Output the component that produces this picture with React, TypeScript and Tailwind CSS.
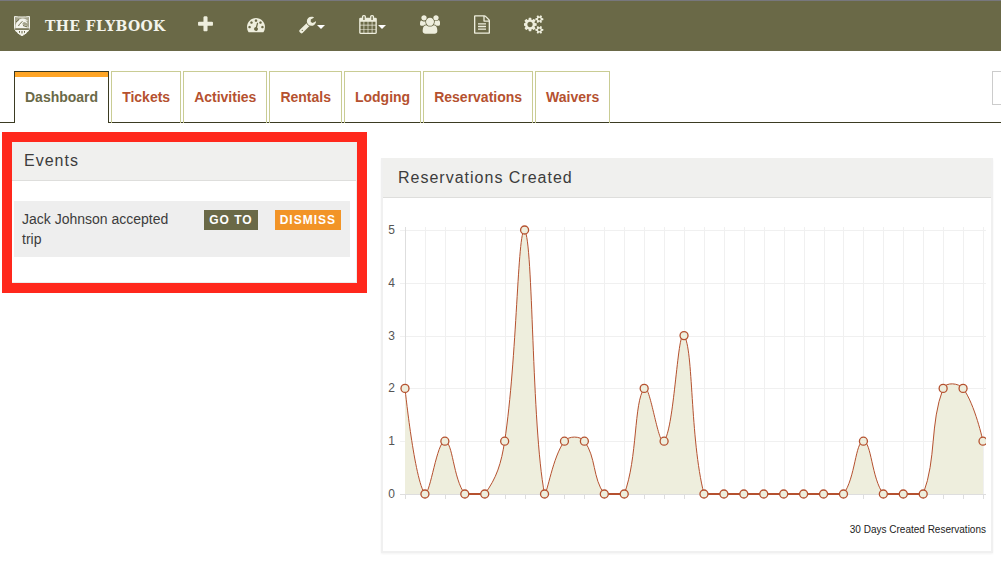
import React from 'react';

type NavIconProps = {
    label: string,
    box: string,
    path: string,
    size: string,
    caret?: boolean
}

const navIcons: NavIconProps[] = [
    {
        label: 'Add',
        box: '192 0 1408 1792',
        size: 'w-[15px] h-[19px]',
        path: 'M1600 736v192q0 40-28 68t-68 28h-416v416q0 40-28 68t-68 28h-192q-40 0-68-28t-28-68v-416h-416q-40 0-68-28t-28-68v-192q0-40 28-68t68-28h416v-416q0-40 28-68t68-28h192q40 0 68 28t28 68v416h416q40 0 68 28t28 68z'
    },
    {
        label: 'Dashboard',
        box: '0 0 1792 1792',
        size: 'w-[18px] h-[19px]',
        path: 'M384 1152q0-53-37.5-90.5t-90.5-37.5-90.5 37.5-37.5 90.5 37.5 90.5 90.5 37.5 90.5-37.5 37.5-90.5zm192-448q0-53-37.5-90.5t-90.5-37.5-90.5 37.5-37.5 90.5 37.5 90.5 90.5 37.5 90.5-37.5 37.5-90.5zm428 481l101-382q6-26-7.5-48.5t-38.5-29.5-48 6.5-30 39.5l-101 382q-60 5-107 43.5t-63 98.5q-20 77 20 146t117 89 146-20 89-117q16-60-6-117t-72-91zm660-33q0-53-37.5-90.5t-90.5-37.5-90.5 37.5-37.5 90.5 37.5 90.5 90.5 37.5 90.5-37.5 37.5-90.5zm-640-640q0-53-37.5-90.5t-90.5-37.5-90.5 37.5-37.5 90.5 37.5 90.5 90.5 37.5 90.5-37.5 37.5-90.5zm448 192q0-53-37.5-90.5t-90.5-37.5-90.5 37.5-37.5 90.5 37.5 90.5 90.5 37.5 90.5-37.5 37.5-90.5zm320 448q0 261-141 483-19 29-54 29h-1402q-35 0-54-29-141-221-141-483 0-182 71-348t191-286 286-191 348-71 348 71 286 191 191 286 71 348z'
    },
    {
        label: 'Tools',
        box: '64 0 1664 1792',
        size: 'w-[17px] h-[19px]',
        caret: true,
        path: 'M448 1472q0-26-19-45t-45-19-45 19-19 45 19 45 45 19 45-19 19-45zm644-420l-682 682q-37 37-90 37-52 0-91-37l-106-108q-38-36-38-90 0-53 38-91l681-681q39 98 114.5 173.5t173.5 114.5zm634-435q0 39-23 106-47 134-164.5 217.5t-258.5 83.5q-185 0-316.5-131.5t-131.5-316.5 131.5-316.5 316.5-131.5q58 0 121.5 16.5t107.5 46.5q16 11 16 28t-16 28l-293 169v224l193 107q5-3 79-48.5t135.5-81 70.5-35.5q15 0 23.5 10t8.5 25z'
    },
    {
        label: 'Calendar',
        box: '64 0 1664 1792',
        size: 'w-[18px] h-[19px]',
        caret: true,
        path: 'M192 1664h288v-288h-288v288zm352 0h320v-288h-320v288zm-352-352h288v-320h-288v320zm352 0h320v-320h-320v320zm-352-384h288v-288h-288v288zm736 736h320v-288h-320v288zm-384-736h320v-288h-320v288zm768 736h288v-288h-288v288zm-384-352h320v-320h-320v320zm-352-864v-288q0-13-9.5-22.5t-22.5-9.5h-64q-13 0-22.5 9.5t-9.5 22.5v288q0 13 9.5 22.5t22.5 9.5h64q13 0 22.5-9.5t9.5-22.5zm736 864h288v-320h-288v320zm-384-384h320v-288h-320v288zm384 0h288v-288h-288v288zm32-480v-288q0-13-9.5-22.5t-22.5-9.5h-64q-13 0-22.5 9.5t-9.5 22.5v288q0 13 9.5 22.5t22.5 9.5h64q13 0 22.5-9.5t9.5-22.5zm384-64v1280q0 52-38 90t-90 38h-1408q-52 0-90-38t-38-90v-1280q0-52 38-90t90-38h128v-96q0-66 47-113t113-47h64q66 0 113 47t47 113v96h384v-96q0-66 47-113t113-47h64q66 0 113 47t47 113v96h128q52 0 90 38t38 90z'
    },
    {
        label: 'Customers',
        box: '64 0 1920 1792',
        size: 'w-[20px] h-[19px]',
        path: 'M657 896q-162 5-265 128h-134q-82 0-138-40.5t-56-118.5q0-353 124-353 6 0 43.5 21t97.5 42.5 119 21.5q67 0 133-23-5 37-5 66 0 159 93 290zm1071 637q0 120-73 189.5t-194 69.5h-874q-121 0-194-69.5t-73-189.5q0-53 3.5-103.5t14-109 26.5-108.5 43-97.5 62-81 85.5-53.5 111.5-20q10 0 43 21.5t73 48 107 48 135 21.5 135-21.5 107-48 73-48 43-21.5q61 0 111.5 20t85.5 53.5 62 81 43 97.5 26.5 108.5 14 109 3.5 103.5zm-1024-1277q0 106-75 181t-181 75-181-75-75-181 75-181 181-75 181 75 75 181zm704 384q0 159-112.5 271.5t-271.5 112.5-271.5-112.5-112.5-271.5 112.5-271.5 271.5-112.5 271.5 112.5 112.5 271.5zm576 225q0 78-56 118.5t-138 40.5h-134q-103-123-265-128 93-131 93-290 0-29-5-66 66 23 133 23 59 0 119-21.5t97.5-42.5 43.5-21q124 0 124 353zm-128-609q0 106-75 181t-181 75-181-75-75-181 75-181 181-75 181 75 75 181z'
    },
    {
        label: 'Reports',
        box: '128 0 1536 1792',
        size: 'w-[16px] h-[19px]',
        path: 'M1596 380q28 28 48 76t20 88v1152q0 40-28 68t-68 28h-1344q-40 0-68-28t-28-68v-1600q0-40 28-68t68-28h896q40 0 88 20t76 48zm-444-244v376h376q-10-29-22-41l-313-313q-12-12-41-22zm384 1528v-1024h-416q-40 0-68-28t-28-68v-416h-768v1536h1280zm-1024-864q0-14 9-23t23-9h704q14 0 23 9t9 23v64q0 14-9 23t-23 9h-704q-14 0-23-9t-9-23v-64zm736 224q14 0 23 9t9 23v64q0 14-9 23t-23 9h-704q-14 0-23-9t-9-23v-64q0-14 9-23t23-9h704zm0 256q14 0 23 9t9 23v64q0 14-9 23t-23 9h-704q-14 0-23-9t-9-23v-64q0-14 9-23t23-9h704z'
    },
    {
        label: 'Settings',
        box: '0 0 1920 1792',
        size: 'w-[20px] h-[19px]',
        path: 'M832 896q0-106-75-181t-181-75-181 75-75 181 75 181 181 75 181-75 75-181zm768 512q0-52-38-90t-90-38-90 38-38 90q0 53 37.5 90.5t90.5 37.5 90.5-37.5 37.5-90.5zm0-1024q0-52-38-90t-90-38-90 38-38 90q0 53 37.5 90.5t90.5 37.5 90.5-37.5 37.5-90.5zm-384 421v185q0 10-7 19.5t-16 10.5l-155 24q-11 35-32 76 34 48 90 115 7 11 7 20 0 12-7 19-23 30-82.5 89.5t-78.5 59.5q-11 0-21-7l-115-90q-37 19-77 31-11 108-23 155-7 24-30 24h-186q-11 0-20-7.5t-10-17.5l-23-153q-34-10-75-31l-118 89q-7 7-20 7-11 0-21-8-144-133-144-160 0-9 7-19 10-14 41-53t47-61q-23-44-35-82l-152-24q-10-1-17-9.5t-7-19.5v-185q0-10 7-19.5t16-10.5l155-24q11-35 32-76-34-48-90-115-7-11-7-20 0-12 7-20 22-30 82-89t79-59q11 0 21 7l115 90q34-18 77-32 11-108 23-154 7-24 30-24h186q11 0 20 7.5t10 17.5l23 153q34 10 75 31l118-89q8-7 20-7 11 0 21 8 144 133 144 160 0 8-7 19-12 16-42 54t-45 60q23 48 34 82l152 23q10 2 17 10.5t7 19.5zm640 533v140q0 16-149 31-12 27-30 52 51 113 51 138 0 4-4 7-122 71-124 71-8 0-46-47t-52-68q-20 2-30 2t-30-2q-14 21-52 68t-46 47q-2 0-124-71-4-3-4-7 0-25 51-138-18-25-30-52-149-15-149-31v-140q0-16 149-31 13-29 30-52-51-113-51-138 0-4 4-7 4-2 35-20t59-34 30-16q8 0 46 46.5t52 67.5q20-2 30-2t30 2q51-71 92-112l6-2q4 0 124 70 4 3 4 7 0 25-51 138 17 23 30 52 149 15 149 31zm0-1024v140q0 16-149 31-12 27-30 52 51 113 51 138 0 4-4 7-122 71-124 71-8 0-46-47t-52-68q-20 2-30 2t-30-2q-14 21-52 68t-46 47q-2 0-124-71-4-3-4-7 0-25 51-138-18-25-30-52-149-15-149-31v-140q0-16 149-31 13-29 30-52-51-113-51-138 0-4 4-7 4-2 35-20t59-34 30-16q8 0 46 46.5t52 67.5q20-2 30-2t30 2q51-71 92-112l6-2q4 0 124 70 4 3 4 7 0 25-51 138 17 23 30 52 149 15 149 31z'
    }
];

const tabs = ['Dashboard', 'Tickets', 'Activities', 'Rentals', 'Lodging', 'Reservations', 'Waivers'];

const reservations = [2, 0, 1, 0, 0, 1, 5, 0, 1, 1, 0, 0, 2, 1, 3, 0, 0, 0, 0, 0, 0, 0, 0, 1, 0, 0, 0, 2, 2, 1];

const NavIcon = ({label, box, path, size, caret}: NavIconProps) => (
    <button type="button" aria-label={label} className="flex items-center gap-px text-[#eeeedd]">
        <svg viewBox={box} className={size} fill="currentColor" aria-hidden="true">
            <path d={path} />
        </svg>
        {caret && (
            <svg viewBox="0 0 8 4" className="w-2 h-1 mt-1" fill="#fff" aria-hidden="true">
                <path d="M0 0h8L4 4z" />
            </svg>
        )}
    </button>
);

const Shield = () => (
    <svg viewBox="0 0 16 20" className="w-4 h-5" aria-hidden="true">
        <path d="M0.5 0.500c5 0.700 10 0.700 15 0v10.500c0 4-3.500 6.500-7.500 8.700c-4-2.200-7.500-4.700-7.500-8.700z" fill="#a5a48c" stroke="#f4f4ec" strokeWidth="1" />
        <path d="M1.500 9c1.500-4 3.500-6 6.500-6.500c2.500-0.300 4.500 0.600 6 2.500l-3-0.500c1.500 0.700 2.300 1.700 2.500 3l-3-1.500c-1.500 0.300-2.500 1.300-2 2.500c2 1 4 1 6 2.500v1h-13z" fill="#f4f4ec" />
        <path d="M2 6l3-2.500M4.500 10c1-2 2-3.200 4-4.500M9 9.500l4.500 1.500" fill="none" stroke="#6a6947" strokeWidth="1" />
        <path d="M1 13.200h14" stroke="#6a6947" strokeWidth="1" />
        <path d="M1.500 14h13c-1 2.200-3.500 4-6.500 5.500c-3-1.500-5.500-3.300-6.500-5.500z" fill="#f4f4ec" />
        <path d="M5.500 15v1.800M8 15v2.500M10.500 15v1.800" stroke="#6a6947" strokeWidth="1" />
    </svg>
);

const LEFT = 22;
const RIGHT = 600;
const TOP = 32;
const BOTTOM = 296;

const points = reservations.map((value, i) => ({
    x: LEFT + i * (RIGHT - LEFT) / (reservations.length - 1),
    y: BOTTOM - value * (BOTTOM - TOP) / 5
}));

const clampY = (y: number) => Math.min(BOTTOM, Math.max(TOP, y));

// spline handles are weighted by the distance to each neighbour, the two ends have none
const handles = points.map((p, i) => {
    const prev = points[i - 1];
    const next = points[i + 1];

    if(!prev || !next){
        return {inX: p.x, inY: p.y, outX: p.x, outY: p.y};
    }

    const before = Math.hypot(p.x - prev.x, p.y - prev.y);
    const after = Math.hypot(next.x - p.x, next.y - p.y);
    const a = 0.4 * before / (before + after);
    const b = 0.4 * after / (before + after);

    return {
        inX: p.x - a * (next.x - prev.x),
        inY: clampY(p.y - a * (next.y - prev.y)),
        outX: p.x + b * (next.x - prev.x),
        outY: clampY(p.y + b * (next.y - prev.y))
    };
});

const line = points.map((p, i) => {
    if(i === 0){
        return `M${p.x} ${p.y}`;
    }
    return `C${handles[i - 1].outX} ${handles[i - 1].outY} ${handles[i].inX} ${handles[i].inY} ${p.x} ${p.y}`;
}).join('');

const Chart = () => (
    <svg viewBox="0 0 603 310" className="block w-full h-auto" role="img" aria-label="Reservations created per day">
        {[0, 1, 2, 3, 4, 5].map((n) => {
            const y = Math.round(BOTTOM - n * (BOTTOM - TOP) / 5);

            return (
                <g key={n}>
                    <path d={`M17 ${y + 0.5}H603`} stroke={n === 0 ? '#dedede' : '#f0f0f0'} />
                    <text x="12" y={y + 4} textAnchor="end" className="font-['Liberation_Sans',Arial,sans-serif] text-[12px]" fill="#555">{n}</text>
                </g>
            );
        })}
        {points.map((p, i) => (
            <path key={i} d={`M${Math.round(p.x) + 0.5} 29V301`} stroke={i === 0 ? '#dedede' : '#f0f0f0'} />
        ))}
        <path d={`${line}V${BOTTOM}H${LEFT}z`} fill="#eeeedd" />
        {points.map((p, i) => (
            <path key={i} d={`M${Math.round(p.x) + 0.5} ${BOTTOM}v5`} stroke="#dedede" />
        ))}
        <path d={line} fill="none" stroke="#b5512f" />
        {points.slice(1).map((p, i) => (
            p.y === BOTTOM && points[i].y === BOTTOM && <path key={i} d={`M${points[i].x} ${BOTTOM}H${p.x}`} stroke="#b5512f" strokeWidth="2" />
        ))}
        {points.map((p, i) => (
            <circle key={i} cx={p.x} cy={p.y} r="4" fill="#eeeedd" stroke="#b5512f" strokeWidth="1.300" />
        ))}
    </svg>
);

const App = () => {
    return (
        <div className="min-h-screen overflow-hidden bg-white font-['Liberation_Sans',Arial,sans-serif] text-sm text-[#3c3c3c]">
            <header className="flex items-center h-[51px] pl-[14px] border-t border-[#77777d] bg-[#6a6947]">
                <a href="#" className="flex items-center gap-[15px] w-[184px] text-[#f4f4ec]">
                    <Shield />
                    <span className="font-['DejaVu_Serif',serif] font-bold text-[14px] tracking-wide whitespace-nowrap">THE FLYBOOK</span>
                </a>
                <nav className="flex items-center gap-[34px] pb-[3px]">
                    {navIcons.map((icon) => <NavIcon key={icon.label} {...icon} />)}
                </nav>
            </header>

            <div className="flex justify-between items-start mt-5 pl-[14px] border-b border-[#3b3b22]">
                <nav className="flex gap-[2px] -mb-px">
                    {tabs.map((tab, i) => (
                        <a
                            key={tab}
                            href="#"
                            className={i === 0
                                ? 'h-[52px] px-[10px] border border-b-0 border-[#3b3b22] bg-white font-bold text-[#6a6947]'
                                : 'h-[52px] px-[10px] border border-b-0 border-[#c9cc94] font-bold text-[#b5512f]'}
                        >
                            <span className={i === 0 ? 'block -mx-[10px] h-[5px] bg-[#ffa526]' : 'block h-[5px]'} />
                            <span className="block pt-[10px] leading-5">{tab}</span>
                        </a>
                    ))}
                </nav>
                <div className="w-[9px] overflow-hidden">
                    <input type="text" aria-label="Search" className="block w-40 h-[34px] border border-[#ccc] bg-white" />
                </div>
            </div>

            <main className="flex items-start gap-[14px] pt-[9px] pl-[2px] pr-2">
                <section className="w-[365px] shrink-0 border-[10px] border-[#ff281c]">
                    <div className="border-r border-b border-[#ececec] pb-[25px]">
                        <h2 className="h-[39px] pl-3 border-b border-[#dededc] bg-[#f0f0ee] text-base leading-[37px] tracking-[1px]">Events</h2>
                        <div className="flex items-start mt-5 ml-[2px] mr-[6px] py-2 pl-2 pr-[9px] bg-[#eee]">
                            <p className="flex-1 pr-6 leading-5">Jack Johnson accepted trip</p>
                            <div className="flex gap-[17px] pt-px">
                                <button type="button" className="h-5 px-[5px] bg-[#6a6947] text-xs font-bold tracking-[1px] text-white">GO TO</button>
                                <button type="button" className="h-5 px-[5px] bg-[#f29427] text-xs font-bold tracking-[1px] text-white">DISMISS</button>
                            </div>
                        </div>
                    </div>
                </section>

                <section className="flex-1 min-w-0 mt-[26px] border-2 border-t-0 border-[#f0f0f0] shadow-xs">
                    <h2 className="h-10 pl-[15px] border-b border-[#dededc] bg-[#f0f0ee] text-base leading-[39px] tracking-[1px]">Reservations Created</h2>
                    <div className="pr-[5px] pb-[15px]">
                        <Chart />
                        <p className="mt-4 text-right text-[10px] leading-3 text-[#222]">30 Days Created Reservations</p>
                    </div>
                </section>
            </main>
        </div>
    );
};

export default App;
